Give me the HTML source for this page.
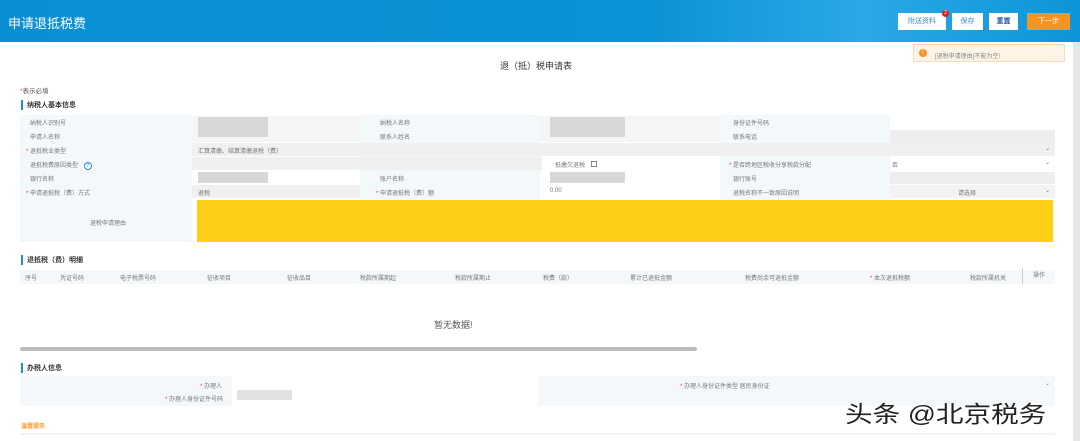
<!DOCTYPE html>
<html><head><meta charset="utf-8"><style>
*{margin:0;padding:0;box-sizing:border-box}
body{width:1080px;height:441px;overflow:hidden;background:#fff;font-family:"Liberation Sans","Noto Sans CJK SC",sans-serif;font-size:6px;color:#777;position:relative}
.a{position:absolute;white-space:nowrap}
.hdr{left:0;top:0;width:1080px;height:42px;background:linear-gradient(90deg,#0a8fd4 0%,#0a93d6 60%,#2aa8e8 80%,#0c95d8 100%)}
.btn{top:13px;height:17px;background:#fff;color:#3a8fd0;font-size:7px;text-align:center;line-height:17px}
.bl{left:20px;width:172px;background:#f3f8fa}
.g{background:#efefef}
.sec{font-weight:bold;color:#333;font-size:7px;border-left:2px solid #1a8fd8;padding-left:4px}
</style></head><body>
<div class="a hdr"></div>
<div class="a" style="left:8px;top:13px;font-size:13px;color:#fff">申请退抵税费</div>
<div class="a btn" style="left:898px;width:48px">附送资料</div>
<div class="a" style="left:942px;top:10px;width:7px;height:7px;border-radius:50%;background:#e02020;color:#fff;font-size:5px;text-align:center;line-height:7px">2</div>
<div class="a btn" style="left:952px;width:31px">保存</div>
<div class="a btn" style="left:989px;width:29px;color:#1a4f9a;font-weight:bold">重置</div>
<div class="a btn" style="left:1027px;width:43px;background:#f7941d;color:#fff">下一步</div>
<div class="a" style="left:1073px;top:42px;width:7px;height:399px;background:#e6e6e6"></div>
<div class="a" style="left:913px;top:44px;width:152px;height:18px;background:#fdf3e6;border:1px solid #f5dcb8"></div>
<div class="a" style="left:919px;top:49px;width:8px;height:8px;border-radius:50%;background:#f7941d;color:#fff;font-size:6px;text-align:center;line-height:8px">!</div>
<div class="a" style="left:935px;top:51px;font-size:6px;color:#888">[退税申请理由]不能为空!</div>
<div class="a" style="left:500px;top:59px;font-size:9px;color:#333">退（抵）税申请表</div>
<div class="a" style="left:20px;top:85px;font-size:6.5px;color:#555"><span style="color:#e33">*</span>表示必填</div>
<div class="a sec" style="left:21px;top:100px">纳税人基本信息</div>
<div class="a bl" style="top:115px;height:127px"></div>
<div class="a" style="left:360px;top:115px;width:180px;height:85px;background:#f3f8fa"></div>
<div class="a" style="left:720px;top:115px;width:170px;height:85px;background:#f3f8fa"></div>
<div class="a g" style="left:192px;top:116px;width:168px;height:26px;background:#f5f5f5"></div>
<div class="a" style="left:198px;top:117px;width:70px;height:20px;background:#d8d8d8"></div>
<div class="a g" style="left:540px;top:116px;width:180px;height:26px;background:#f5f5f5"></div>
<div class="a" style="left:550px;top:117px;width:75px;height:20px;background:#d8d8d8"></div>
<div class="a" style="left:890px;top:130px;width:165px;height:13px;background:#eee"></div>
<div class="a" style="left:192px;top:143px;width:863px;height:13px;background:#f0f0f0"></div>
<div class="a" style="left:192px;top:157px;width:350px;height:13px;background:#f0f0f0"></div>
<div class="a" style="left:198px;top:172px;width:70px;height:11px;background:#d8d8d8"></div>
<div class="a" style="left:550px;top:172px;width:75px;height:11px;background:#d8d8d8"></div>
<div class="a" style="left:890px;top:172px;width:165px;height:12px;background:#eee"></div>
<div class="a" style="left:192px;top:185px;width:168px;height:13px;background:#f0f0f0"></div>
<div class="a" style="left:890px;top:185px;width:165px;height:13px;background:#f3f3f3"></div>
<div class="a" style="left:197px;top:200px;width:856px;height:42px;background:#fdd017"></div>
<div class="a" style="left:30px;top:118px">纳税人识别号</div>
<div class="a" style="left:30px;top:132px">申请人名称</div>
<div class="a" style="left:26px;top:146px"><span style="color:#e33">*</span> 退抵税业类型</div>
<div class="a" style="left:30px;top:160px">退抵税费原因类型 <span style="display:inline-block;width:8px;height:8px;border:1px solid #3a8fd0;border-radius:50%;color:#3a8fd0;text-align:center;line-height:6px;font-size:5px;margin-left:4px">?</span></div>
<div class="a" style="left:30px;top:174px">银行名称</div>
<div class="a" style="left:26px;top:188px"><span style="color:#e33">*</span> 申请退抵税（费）方式</div>
<div class="a" style="left:90px;top:218px">退税申请理由</div>
<div class="a" style="left:198px;top:146px">汇算清缴、结算清缴退税（费）</div>
<div class="a" style="left:198px;top:188px">退税</div>
<div class="a" style="left:380px;top:118px">纳税人名称</div>
<div class="a" style="left:380px;top:132px">联系人姓名</div>
<div class="a" style="left:380px;top:174px">账户名称</div>
<div class="a" style="left:376px;top:188px"><span style="color:#e33">*</span> 申请退抵税（费）额</div>
<div class="a" style="left:550px;top:188px">0.00</div>
<div class="a" style="left:555px;top:160px">抵缴欠退税 <span style="display:inline-block;width:6px;height:6px;border:1px solid #888;margin-left:4px"></span></div>
<div class="a" style="left:733px;top:118px">身份证件号码</div>
<div class="a" style="left:733px;top:132px">联系电话</div>
<div class="a" style="left:729px;top:160px"><span style="color:#e33">*</span> 是否跨地区税收分享税款分配</div>
<div class="a" style="left:733px;top:174px">银行账号</div>
<div class="a" style="left:733px;top:188px">退税名称不一致原因说明</div>
<div class="a" style="left:892px;top:160px">否</div>
<div class="a" style="left:958px;top:188px">请选择</div>
<div class="a" style="left:1045px;top:145px">⌄</div><div class="a" style="left:1045px;top:159px">⌄</div><div class="a" style="left:1045px;top:187px">⌄</div>
<div class="a sec" style="left:21px;top:255px">退抵税（费）明细</div>
<div class="a" style="left:20px;top:270px;width:1035px;height:14px;background:#f5f8fa"></div>
<div class="a" style="left:1022px;top:268px;width:1px;height:16px;background:#ccc"></div>
<div class="a" style="left:25px;top:273px">序号</div><div class="a" style="left:60px;top:273px">凭证号码</div><div class="a" style="left:120px;top:273px">电子税票号码</div><div class="a" style="left:207px;top:273px">征收项目</div><div class="a" style="left:287px;top:273px">征收品目</div><div class="a" style="left:360px;top:273px">税款所属期起</div><div class="a" style="left:455px;top:273px">税款所属期止</div><div class="a" style="left:543px;top:273px">税费（款）</div><div class="a" style="left:630px;top:273px">累计已退抵金额</div><div class="a" style="left:745px;top:273px">税费尚余可退抵金额</div><div class="a" style="left:870px;top:273px"><span style="color:#e33">*</span> 本次退抵税额</div><div class="a" style="left:970px;top:273px">税款所属机关</div><div class="a" style="left:1033px;top:270px">操作</div>
<div class="a" style="left:434px;top:318px;font-size:9px;color:#555">暂无数据!</div>
<div class="a" style="left:20px;top:347px;width:677px;height:4px;border-radius:2px;background:#bbb"></div>
<div class="a sec" style="left:21px;top:363px">办税人信息</div>
<div class="a" style="left:20px;top:376px;width:1035px;height:30px;background:#f5f8fa"></div>
<div class="a" style="left:232px;top:376px;width:306px;height:30px;background:#fff"></div>
<div class="a" style="left:237px;top:390px;width:55px;height:10px;background:#e2e2e2"></div>
<div class="a" style="left:200px;top:381px"><span style="color:#e33">*</span> 办理人</div>
<div class="a" style="left:165px;top:394px"><span style="color:#e33">*</span> 办理人身份证件号码</div>
<div class="a" style="left:680px;top:381px"><span style="color:#e33">*</span> 办理人身份证件类型 居民身份证</div>
<div class="a" style="left:1045px;top:380px">⌄</div>
<div class="a" style="left:21px;top:421px;color:#f7941d;font-weight:bold">温馨提示</div>
<div class="a" style="left:20px;top:433px;width:1035px;height:2px;background:#f3f3f3"></div>
<div class="a" style="left:845px;top:395px;font-size:23px;color:#222;transform:scaleX(1.2);transform-origin:left top;text-shadow:0 0 2px #fff">头条 @北京税务</div>
</body></html>
